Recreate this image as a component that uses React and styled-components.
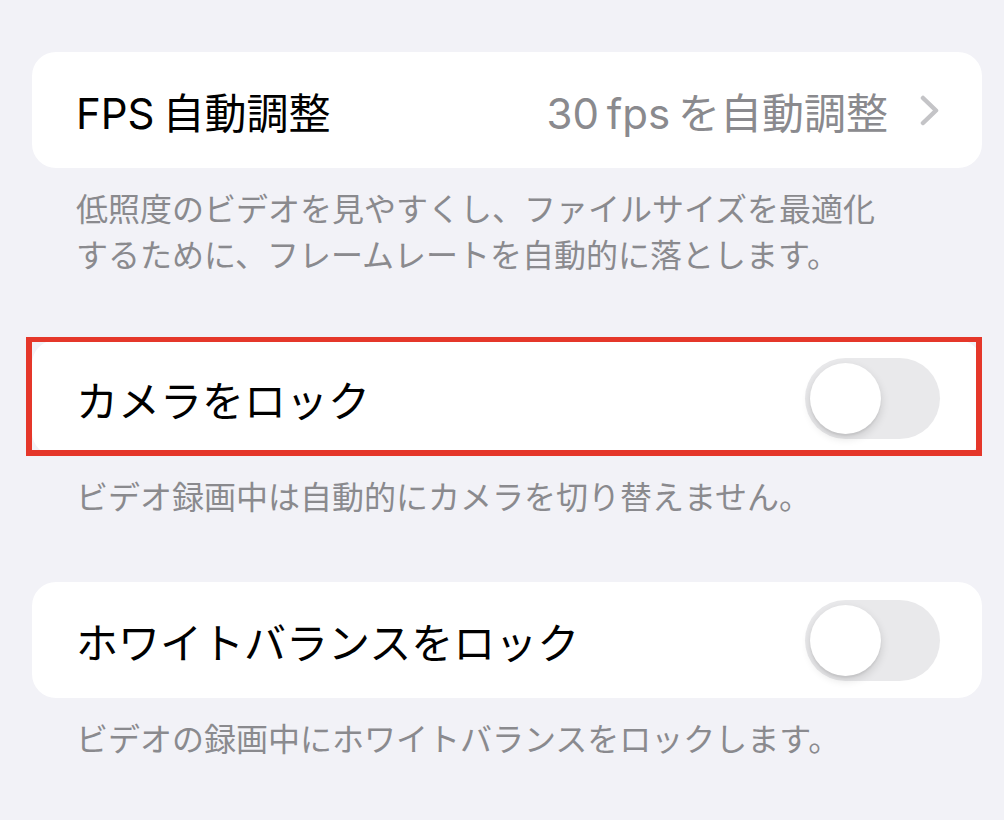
import React from "react";
import styled, { createGlobalStyle } from "styled-components";

const GlobalStyle = createGlobalStyle`
  html, body {
    margin: 0;
    padding: 0;
    background: #f2f2f7;
  }
  body {
    font-family: "Inter", "Noto Sans CJK JP", sans-serif;
    -webkit-font-smoothing: antialiased;
  }
`;

const Page = styled.div`
  width: 1004px;
  min-height: 820px;
  box-sizing: border-box;
  padding: 52px 22px 0 32px;
  display: flex;
  flex-direction: column;
`;

const Section = styled.section`
  display: flex;
  flex-direction: column;
  margin-bottom: 61px;
`;

const CardWrap = styled.div`
  position: relative;
`;

const Card = styled.div`
  height: 116px;
  box-sizing: border-box;
  background: #ffffff;
  border-radius: 24px;
  padding: 0 42px 0 44px;
  display: flex;
  align-items: center;
  justify-content: space-between;
`;

// annotation frame drawn over the highlighted row
const Highlight = styled.div`
  position: absolute;
  top: -3px;
  left: -6px;
  right: 0;
  bottom: 0;
  border: solid #e5372a;
  border-width: 5px 6px 6px 6px;
  pointer-events: none;
`;

const Title = styled.span`
  font-size: 42px;
  color: #000;
  word-spacing: -4px;
  white-space: nowrap;
`;

const Value = styled.span`
  display: flex;
  align-items: center;
  gap: 32px;
  font-size: 42px;
  color: #8a8a8e;
  word-spacing: -4px;
  white-space: nowrap;
`;

const Footer = styled.p`
  margin: 19px 0 0;
  padding: 0 44px;
  font-size: 32px;
  line-height: 46px;
  color: #8a8a8e;
`;

const Track = styled.div`
  width: 135px;
  height: 81px;
  border-radius: 41px;
  background: ${({ on }) => (on ? "#34c759" : "#e9e9eb")};
  padding: 5px;
  box-sizing: border-box;
  display: flex;
  justify-content: ${({ on }) => (on ? "flex-end" : "flex-start")};
  flex-shrink: 0;
`;

const Knob = styled.div`
  width: 71px;
  height: 71px;
  border-radius: 50%;
  background: #fff;
  box-shadow: 0 4px 10px rgba(0, 0, 0, 0.14), 0 2px 2px rgba(0, 0, 0, 0.06);
`;

const Toggle = ({ on }) => (
  <Track on={on ? 1 : 0}>
    <Knob />
  </Track>
);

const Chevron = () => (
  <svg width="20" height="31" viewBox="0 0 20 31" fill="none">
    <polyline
      points="3,3 16,15.5 3,28"
      stroke="#c4c4c7"
      strokeWidth="4.5"
      strokeLinecap="round"
      strokeLinejoin="round"
    />
  </svg>
);

export default function App() {
  return (
    <>
      <GlobalStyle />
      <Page>
        <Section>
          <Card>
            <Title>FPS 自動調整</Title>
            <Value>
              <span>30 fps を自動調整</span>
              <Chevron />
            </Value>
          </Card>
          <Footer>
            低照度のビデオを見やすくし、ファイルサイズを最適化
            <br />
            するために、フレームレートを自動的に落とします。
          </Footer>
        </Section>

        <Section>
          <CardWrap>
            <Card>
              <Title>カメラをロック</Title>
              <Toggle on={false} />
            </Card>
            <Highlight />
          </CardWrap>
          <Footer>ビデオ録画中は自動的にカメラを切り替えません。</Footer>
        </Section>

        <Section>
          <Card>
            <Title>ホワイトバランスをロック</Title>
            <Toggle on={false} />
          </Card>
          <Footer>ビデオの録画中にホワイトバランスをロックします。</Footer>
        </Section>
      </Page>
    </>
  );
}
